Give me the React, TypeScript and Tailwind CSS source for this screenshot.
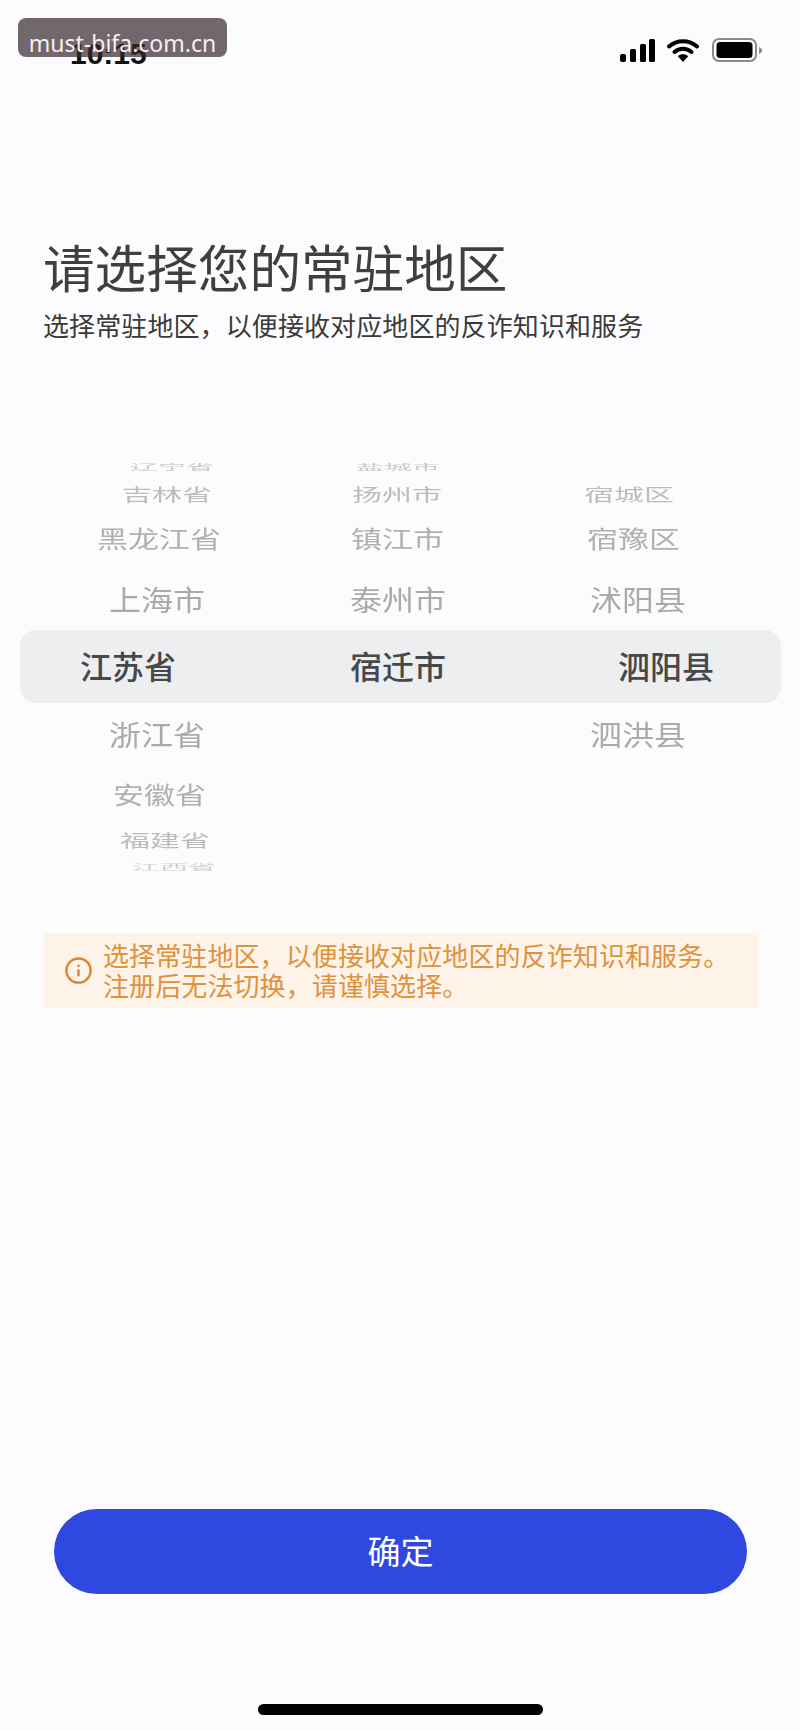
import React from 'react';
import { Info } from 'lucide-react';

const cjk = "font-['Noto_Sans_CJK_SC','Noto_Sans',sans-serif]";

const StatusIcons: React.FC = () => (
  <div className="flex items-start">
    <svg width="35" height="24" viewBox="0 0 35 24" className="mt-px">
      <rect x="0" y="15" width="6" height="8" rx="2" fill="#000" />
      <rect x="10" y="10" width="6" height="13" rx="1.5" fill="#000" />
      <rect x="20" y="5" width="6" height="18" rx="1.5" fill="#000" />
      <rect x="29" y="0" width="6" height="23" rx="1.5" fill="#000" />
    </svg>
    <svg width="32" height="25" viewBox="0 0 32 25" className="ml-3">
      <path d="M2 8.5C9.8 1.6 22.2 1.6 30 8.5" fill="none" stroke="#000" strokeWidth="4" strokeLinecap="round" />
      <path d="M7.5 14C12.6 9.7 19.4 9.7 24.5 14" fill="none" stroke="#000" strokeWidth="4" strokeLinecap="round" />
      <path d="M10.8 18.2C13.8 15.6 18.2 15.6 21.2 18.2L16 24Z" fill="#000" />
    </svg>
    <svg width="50" height="24" viewBox="0 0 50 24" className="ml-[13px]">
      <rect x="1" y="1" width="43" height="22" rx="6" fill="none" stroke="#8a8a8a" strokeWidth="2" />
      <rect x="4.5" y="4" width="36" height="16" rx="3.5" fill="#000" />
      <path d="M47 9L50 11V14L47 16Z" fill="#8a8a8a" />
    </svg>
  </div>
);

// 滚轮每一行：高度、字号、纵向压缩、颜色和三列的左内边距都不一样
const Row: React.FC<{
  className: string;
  textClass: string;
  cells: { text: string; pad: string }[];
}> = ({ className, textClass, cells }) => (
  <div className={`grid grid-cols-[250px_250px_1fr] items-center ml-[20px] mr-[19px] ${className}`}>
    {cells.map((cell, i) =>
      cell.text ? (
        <div key={i} className={`whitespace-nowrap ${cell.pad} ${textClass}`}>
          {cell.text}
        </div>
      ) : (
        <div key={i} />
      )
    )}
  </div>
);

const App: React.FC = () => {
  return (
    <div className={`relative flex flex-col w-[800px] h-[1731px] overflow-hidden bg-[#fcfcfe] ${cjk}`}>
      <div className="flex items-start justify-between h-[63px] pt-[38px] pl-[70px] pr-[38px]">
        <span className="pt-[2px] font-['Liberation_Sans',sans-serif] font-bold text-[30px] leading-[27px] text-[#111]">10:15</span>
        <StatusIcons />
      </div>

      <div className="absolute left-[18px] top-[18px] w-[209px] h-[39px] rounded-lg bg-[#38282d]/70 pt-[9px] text-center font-['Noto_Sans',sans-serif] text-[23px] leading-[32px] text-[#f7efef]">
        must-bifa.com.cn
      </div>

      <h1 className="mt-[173px] ml-[43px] text-[51.6px] leading-[60px] font-normal text-[#3f3f41] whitespace-nowrap">请选择您的常驻地区</h1>
      <p className="mt-[11px] ml-[43px] text-[26px] leading-[36px] tracking-[0.1px] text-[#3a3a3a] whitespace-nowrap">选择常驻地区，以便接收对应地区的反诈知识和服务</p>

      <div className="mt-[111px] flex flex-col blur-[0.4px]">
        <Row
          className="h-[24px]"
          textClass="text-[28px] leading-[24px] text-[#c9c9c9] scale-y-[0.3]"
          cells={[
            { text: '辽宁省', pad: 'pl-[110px]' },
            { text: '盐城市', pad: 'pl-[86px]' },
            { text: '', pad: '' },
          ]}
        />
        <Row
          className="h-[30px]"
          textClass="text-[30px] leading-[30px] text-[#bcbcbc] scale-y-[0.58]"
          cells={[
            { text: '吉林省', pad: 'pl-[102px]' },
            { text: '扬州市', pad: 'pl-[82px]' },
            { text: '宿城区', pad: 'pl-[64px]' },
          ]}
        />
        <Row
          className="h-[62px]"
          textClass="text-[31px] leading-[40px] pb-[2px] text-[#b0b0b0] scale-y-[0.76]"
          cells={[
            { text: '黑龙江省', pad: 'pl-[77px]' },
            { text: '镇江市', pad: 'pl-[81px]' },
            { text: '宿豫区', pad: 'pl-[67px]' },
          ]}
        />
        <Row
          className="h-[60px]"
          textClass="text-[32px] leading-[40px] pb-[4px] text-[#aaaaaa] scale-y-[0.9]"
          cells={[
            { text: '上海市', pad: 'pl-[89px]' },
            { text: '泰州市', pad: 'pl-[80px]' },
            { text: '沭阳县', pad: 'pl-[70px]' },
          ]}
        />
        <Row
          className="h-[73px] rounded-2xl bg-[#eceef0]"
          textClass="text-[32px] leading-[40px] pb-[4px] font-medium text-[#47484b]"
          cells={[
            { text: '江苏省', pad: 'pl-[60px]' },
            { text: '宿迁市', pad: 'pl-[80px]' },
            { text: '泗阳县', pad: 'pl-[98px]' },
          ]}
        />
        <Row
          className="h-[64px]"
          textClass="text-[32px] leading-[40px] pb-[4px] text-[#aaaaaa] scale-y-[0.9]"
          cells={[
            { text: '浙江省', pad: 'pl-[89px]' },
            { text: '', pad: '' },
            { text: '泗洪县', pad: 'pl-[70px]' },
          ]}
        />
        <Row
          className="h-[56px]"
          textClass="text-[31px] leading-[40px] pb-[2px] text-[#b0b0b0] scale-y-[0.76]"
          cells={[
            { text: '安徽省', pad: 'pl-[93px]' },
            { text: '', pad: '' },
            { text: '', pad: '' },
          ]}
        />
        <Row
          className="h-[34px]"
          textClass="text-[30px] leading-[30px] pb-[2px] text-[#bcbcbc] scale-y-[0.58]"
          cells={[
            { text: '福建省', pad: 'pl-[100px]' },
            { text: '', pad: '' },
            { text: '', pad: '' },
          ]}
        />
        <Row
          className="h-[20px]"
          textClass="text-[28px] leading-[20px] text-[#cfcfcf] scale-y-[0.28]"
          cells={[
            { text: '江西省', pad: 'pl-[112px]' },
            { text: '', pad: '' },
            { text: '', pad: '' },
          ]}
        />
      </div>

      <div className="mt-[56px] ml-[44px] mr-[41px] h-[75px] flex items-center bg-[#fdf3e9] pl-[20px] text-[#e0913c]">
        <Info size={29} strokeWidth={2} className="shrink-0 text-[#d9863a]" />
        <div className="ml-[10px] pb-[1px] text-[26px] leading-[30px] tracking-[0.1px] whitespace-nowrap">
          <div>选择常驻地区，以便接收对应地区的反诈知识和服务。</div>
          <div>注册后无法切换，请谨慎选择。</div>
        </div>
      </div>

      <button className="mt-auto ml-[54px] mr-[53px] h-[85px] rounded-full bg-[#2f49e0] pb-[3px] text-[33px] leading-[40px] text-white">确定</button>

      <div className="mt-[110px] mb-[16px] mx-auto w-[285px] h-[11px] rounded-full bg-black" />
    </div>
  );
};

export default App;
